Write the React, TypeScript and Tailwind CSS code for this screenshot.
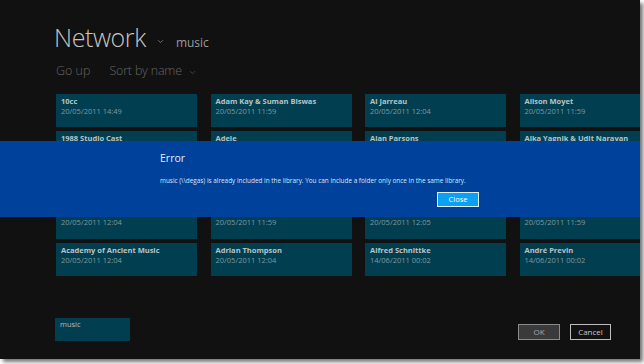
import { ChevronDown } from 'lucide-react';

type Folder = { name: string; date: string };

const folders: Folder[][] = [
  [
    { name: '10cc', date: '20/05/2011 14:49' },
    { name: 'Adam Kay & Suman Biswas', date: '20/05/2011 11:59' },
    { name: 'Al Jarreau', date: '20/05/2011 12:04' },
    { name: 'Alison Moyet', date: '20/05/2011 11:59' },
  ],
  [
    { name: '1988 Studio Cast', date: '20/05/2011 12:04' },
    { name: 'Adele', date: '20/05/2011 11:59' },
    { name: 'Alan Parsons', date: '20/05/2011 12:05' },
    { name: 'Alka Yagnik & Udit Narayan', date: '20/05/2011 11:59' },
  ],
  // this row sits fully under the error band, nothing of it shows
  [
    { name: '', date: '' },
    { name: '', date: '' },
    { name: '', date: '' },
    { name: '', date: '' },
  ],
  [
    { name: '', date: '20/05/2011 12:04' },
    { name: '', date: '20/05/2011 11:59' },
    { name: '', date: '20/05/2011 12:05' },
    { name: '', date: '20/05/2011 11:59' },
  ],
  [
    { name: 'Academy of Ancient Music', date: '20/05/2011 12:04' },
    { name: 'Adrian Thompson', date: '20/05/2011 12:04' },
    { name: 'Alfred Schnittke', date: '14/06/2011 00:02' },
    { name: 'André Previn', date: '14/06/2011 00:02' },
  ],
];

function Tile({ folder }: { folder: Folder }) {
  return (
    <div className="h-[33px] w-[141px] shrink-0 bg-[#013f50] px-[5px] pt-[3px] leading-[9px]">
      <div className="h-[9px] text-[7.5px] font-bold text-[#b9c3c6] whitespace-nowrap">{folder.name}</div>
      <div className="h-[9px] text-[7.5px] text-[#7e98a0] whitespace-nowrap mt-[0.5px]">{folder.date}</div>
    </div>
  );
}

export default function App() {
  return (
    <div className="w-[644px] h-[364px] bg-white" style={{ fontFamily: '"Open Sans", "Noto Sans", sans-serif' }}>
      <div className="relative w-[640px] h-[359px] bg-[#111111] overflow-hidden shadow-[3px_3px_4px_rgba(0,0,0,0.55)] flex flex-col pl-[56px]">
        {/* Header */}
        <div className="flex items-end h-[50px] pt-[22px]">
          <span className="text-[25px] font-light leading-[25px] text-[#c4c4c4] ml-[-2px] tracking-[-0.4px]">Network</span>
          <ChevronDown className="w-[9px] h-[9px] text-[#aaaaaa] ml-[10px] mb-[4px]" strokeWidth={1.5} />
          <span className="text-[12px] leading-[12px] text-[#9c9c9c] ml-[11px] mb-[1px]">music</span>
        </div>

        {/* Commands */}
        <div className="flex items-center h-[16px] mt-[13px] text-[12.5px] font-light text-[#666666] leading-[14px]">
          <span>Go up</span>
          <span className="ml-[19px] tracking-[-0.2px]">Sort by name</span>
          <ChevronDown className="w-[9px] h-[9px] ml-[6px] mt-[2px]" strokeWidth={1.5} />
        </div>

        {/* Folder grid */}
        <div className="flex flex-col gap-[4.25px] mt-[15px]">
          {folders.map((row, i) => (
            <div key={i} className="flex gap-[13.5px]">
              {row.map((f, j) => (
                <Tile key={j} folder={f} />
              ))}
            </div>
          ))}
        </div>

        {/* Bottom bar */}
        <div className="flex items-start mt-[42px] pr-[29px]">
          <div className="w-[75px] h-[23px] bg-[#013f50] px-[5px] pt-[2px] text-[7.5px] leading-[9px] text-[#b0bcc0] ml-[-1px]">music</div>
          <div className="flex-1" />
          <div className="flex gap-[10px] mt-[6px]">
            <button className="w-[42px] h-[16px] border border-[#8a8a8a] bg-[#3a3a3c] text-[8px] text-[#a8a8a8] leading-[14px]">OK</button>
            <button className="w-[41px] h-[16px] border border-[#bdbdbd] bg-[#111111] text-[8px] text-[#c8c8c8] leading-[14px]">Cancel</button>
          </div>
        </div>

        {/* Error dialog band */}
        <div className="absolute left-0 right-0 top-[141px] h-[76px] bg-[#00419b] pl-[160px] pt-[10px]">
          <div className="w-[319px] flex flex-col">
            <div className="text-[10.5px] leading-[14px] text-[#e6ecf5]">Error</div>
            <div className="text-[6.4px] leading-[10px] text-[#dfe6f2] mt-[11px] whitespace-nowrap">
              music (\\degas) is already included in the library. You can include a folder only once in the same library.
            </div>
            <div className="flex justify-end mt-[6px]">
              <button className="w-[42px] h-[15px] bg-[#0aa0f4] border border-[#dfefff] text-[7.5px] leading-[13px] text-white">Close</button>
            </div>
          </div>
        </div>
      </div>
    </div>
  );
}
